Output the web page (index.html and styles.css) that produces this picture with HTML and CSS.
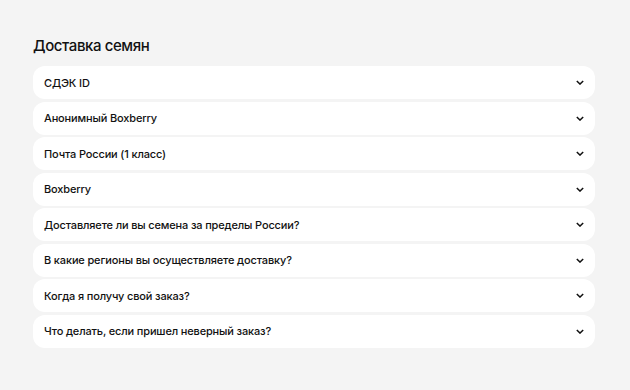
FILE: index.html
```html
<!DOCTYPE html>
<html lang="ru">
<head>
    <meta charset="UTF-8">
    <meta name="viewport" content="width=device-width, initial-scale=1.0">
    <title>Доставка семян</title>
    <link rel="stylesheet" href="styles.css">
</head>
<body>
    <section class="faq">
        <h2 class="faq-title">Доставка семян</h2>
        <div class="faq-list">
            <div class="faq-item"><span>СДЭК ID</span><svg class="chevron" viewBox="0 0 10 6"><path d="M1 1l4 4 4-4"/></svg></div>
            <div class="faq-item"><span>Анонимный Boxberry</span><svg class="chevron" viewBox="0 0 10 6"><path d="M1 1l4 4 4-4"/></svg></div>
            <div class="faq-item"><span>Почта России (1 класс)</span><svg class="chevron" viewBox="0 0 10 6"><path d="M1 1l4 4 4-4"/></svg></div>
            <div class="faq-item"><span>Boxberry</span><svg class="chevron" viewBox="0 0 10 6"><path d="M1 1l4 4 4-4"/></svg></div>
            <div class="faq-item"><span>Доставляете ли вы семена за пределы России?</span><svg class="chevron" viewBox="0 0 10 6"><path d="M1 1l4 4 4-4"/></svg></div>
            <div class="faq-item"><span>В какие регионы вы осуществляете доставку?</span><svg class="chevron" viewBox="0 0 10 6"><path d="M1 1l4 4 4-4"/></svg></div>
            <div class="faq-item"><span>Когда я получу свой заказ?</span><svg class="chevron" viewBox="0 0 10 6"><path d="M1 1l4 4 4-4"/></svg></div>
            <div class="faq-item"><span>Что делать, если пришел неверный заказ?</span><svg class="chevron" viewBox="0 0 10 6"><path d="M1 1l4 4 4-4"/></svg></div>
        </div>
    </section>
</body>
</html>
```
FILE: styles.css
```css
/* Общие стили */
body {
    margin: 0;
    background-color: #f4f4f4;
    font-family: Inter, "Noto Sans", sans-serif;
    color: #111;
}

/* Блок вопросов */
.faq {
    padding: 36px 35px 0 33px;
}

.faq-title {
    margin: 0 0 10px;
    font-size: 15px;
    font-weight: 500;
    line-height: 20px;
    letter-spacing: -0.4px;
}

.faq-list {
    display: flex;
    flex-direction: column;
    gap: 2.5px;
}

/* Пункт списка */
.faq-item {
    display: flex;
    justify-content: space-between;
    align-items: center;
    height: 33px;
    padding: 0 11px;
    background: #fff;
    border-radius: 12px;
    font-size: 11px;
    font-weight: 500;
    letter-spacing: -0.15px;
}

.chevron {
    width: 8px;
    height: 5px;
    fill: none;
    stroke: #111;
    stroke-width: 1.8;
}
```
